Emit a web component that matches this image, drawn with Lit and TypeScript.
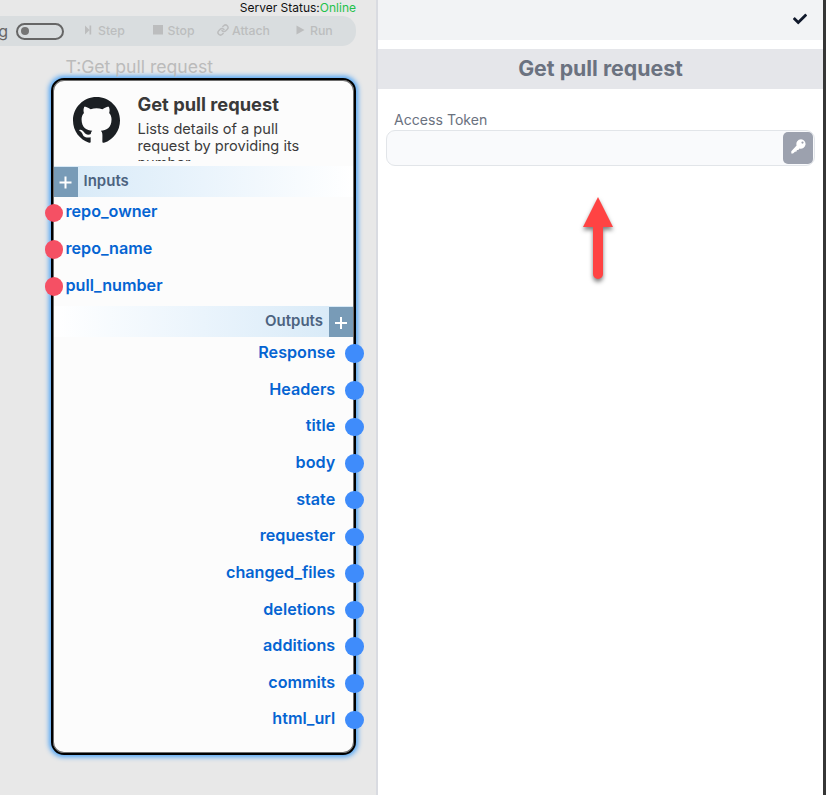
import { LitElement, html, css } from "lit";
import { customElement, property } from "lit/decorators.js";

const sans = css`Inter, "Liberation Sans", sans-serif`;

@customElement("tool-bar")
class ToolBar extends LitElement {
  static styles = css`
    :host { display: flex; box-sizing: border-box; height: 30px; width: 356px; align-items: center; background: #d9dddf; border-radius: 0 14px 14px 0; overflow: hidden; font: 500 12.3px/30px ${sans}; color: #bcbdbe; white-space: nowrap; }
    .label { flex: none; width: 8px; margin-right: 8px; display: flex; justify-content: flex-end; font-weight: 400; font-size: 16px; color: #666; }
    .switch { flex: none; box-sizing: border-box; width: 48px; height: 17px; border: 2px solid #666; border-radius: 9px; padding: 2.5px 3px; margin-right: 21px; }
    .knob { width: 8px; height: 8px; border-radius: 50%; background: #757575; }
    .item { display: flex; align-items: center; flex: none; }
    svg { fill: #bcbdbe; flex: none; display: block; position: relative; top: -1px; }
    .step { width: 68px; } .stop { width: 64px; } .attach { width: 79px; }
    .step svg { margin-right: 6px; }
    .stop svg { margin-right: 4.5px; }
    .attach svg { margin-right: 3px; }
    .run svg { margin-right: 5px; }
  `;
  render() {
    return html`
      <span class="label">Debug</span>
      <span class="switch"><div class="knob"></div></span>
      <span class="item step"><svg width="7" height="10" viewBox="0 0 7 10"><path d="M0 .5l4.500 4.500L0 9.500zM4.500 .5h1.700v9H4.500z" /></svg>Step</span>
      <span class="item stop"><svg width="10" height="10" viewBox="0 0 10 10"><path d="M0 0h10v9.500H0z" /></svg>Stop</span>
      <span class="item attach"><svg width="12" height="12" viewBox="0 0 24 24"><g fill="none" stroke="#bcbdbe" stroke-width="3" stroke-linecap="round"><path d="M10 13a5 5 0 0 0 7.540.54l3-3a5 5 0 0 0-7.070-7.070l-1.720 1.710" /><path d="M14 11a5 5 0 0 0-7.540-.54l-3 3a5 5 0 0 0 7.070 7.070l1.710-1.710" /></g></svg>Attach</span>
      <span class="item run"><svg width="9" height="10" viewBox="0 0 9 10"><path d="M.5.5L8.500 5l-8 4.500z" /></svg>Run</span>
    `;
  }
}

@customElement("flow-node")
class FlowNode extends LitElement {
  @property({ attribute: false }) inputs: string[] = [];
  @property({ attribute: false }) outputs: string[] = [];
  static styles = css`
    :host { display: block; box-sizing: border-box; width: 305px; height: 677px; border: 2px solid #000; border-radius: 13px; background: #fcfcfc; box-shadow: 0 0 5px 1.500px #4da3f5, inset 0 0 0 1px #6d6d6d; font-family: ${sans}; }
    .head { display: flex; height: 86px; box-sizing: border-box; padding: 0 20px; }
    .logo { flex: none; margin: 17px 17.500px 0 0; fill: #1b1f23; }
    .info { padding-top: 13px; height: 84px; box-sizing: border-box; width: 180px; color: #3b3b3b; }
    .name { font: 700 18.300px/23px ${sans}; color: #393939; white-space: nowrap; }
    .desc { font: 400 14.600px/17px ${sans}; margin-top: 5px; height: 40px; overflow: hidden; }
    .bar { display: flex; align-items: center; height: 31px; font-weight: 600; font-size: 15px; color: #4c6380; }
    .in { background: linear-gradient(90deg, #d6e9f7, #eaf4fc 50%, #fff); margin: 0 1px 0 0.500px; }
    .out { background: linear-gradient(270deg, #d6e9f7, #eaf4fc 50%, #fff); justify-content: flex-end; margin: 0 1px; }
    .title { margin: 0 6px; position: relative; top: -1px; }
    .plus { width: 24px; height: 30px; background: #789bb7; display: block; }
    .row { display: flex; align-items: center; height: 36.630px; font-weight: 600; font-size: 16.150px; color: #0564d2; }
    .row span { position: relative; top: -1.500px; }
    .inputs .row { height: 36.700px; margin-left: -8.500px; gap: 2.500px; }
    .inputs .row span { top: -2px; }
    .outputs .row { margin-right: -9.700px; gap: 10px; justify-content: flex-end; }
    .dot { flex: none; width: 18.500px; height: 18.500px; border-radius: 50%; }
    .inputs .dot { background: #f55064; position: relative; top: -0.300px; }
    .outputs .dot { background: #3f8cfb; }
    .inputs { height: 109px; margin-top: -2px; margin-bottom: 2px; }
    .outputs { margin-top: -1.700px; }
  `;
  private plus(x: number, y: number) {
    return html`<svg class="plus" viewBox="0 0 24 30"><path d="M${x - 6} ${y}h12M${x} ${y - 6}v12" stroke="#fff" stroke-width="2" /></svg>`;
  }
  render() {
    return html`
      <div class="head">
        <svg class="logo" width="47" height="47" viewBox="0 0 16 16"><path d="M8 0C3.580 0 0 3.580 0 8c0 3.540 2.290 6.530 5.470 7.590.4.070.55-.17.55-.38 0-.19-.01-.82-.01-1.490-2.010.37-2.530-.49-2.690-.94-.09-.23-.48-.94-.82-1.130-.28-.15-.68-.52-.01-.53.63-.01 1.080.58 1.230.82.72 1.210 1.870.87 2.330.66.07-.52.28-.87.51-1.070-1.780-.2-3.640-.89-3.640-3.950 0-.87.31-1.590.82-2.150-.08-.2-.36-1.020.08-2.120 0 0 .67-.21 2.200.82.64-.18 1.320-.27 2-.27s1.360.09 2 .27c1.530-1.040 2.200-.82 2.200-.82.44 1.100.16 1.920.08 2.120.51.56.82 1.270.82 2.150 0 3.070-1.870 3.750-3.650 3.950.29.25.54.73.54 1.480 0 1.070-.01 1.930-.01 2.200 0 .21.15.46.55.38A8.010 8.010 0 0 0 16 8c0-4.420-3.580-8-8-8z" /></svg>
        <div class="info">
          <div class="name">Get pull request</div>
          <div class="desc">Lists details of a pull request by providing its number.</div>
        </div>
      </div>
      <div class="bar in">${this.plus(11.5, 15.5)}<span class="title">Inputs</span></div>
      <div class="inputs">${this.inputs.map((n) => html`<div class="row"><i class="dot"></i><span>${n}</span></div>`)}</div>
      <div class="bar out"><span class="title">Outputs</span>${this.plus(12, 16)}</div>
      <div class="outputs">${this.outputs.map((n) => html`<div class="row"><span>${n}</span><i class="dot"></i></div>`)}</div>
    `;
  }
}

@customElement("detail-panel")
class DetailPanel extends LitElement {
  static styles = css`
    :host { display: block; flex: 1; background: #fff; font-family: ${sans}; }
    .top { height: 40px; box-sizing: border-box; background: #f2f3f5; display: flex; justify-content: flex-end; padding: 12px 16px 0 0; }
    .top svg { fill: #10182b; display: block; }
    .title { margin-top: 9px; height: 40px; background: #e5e6ea; color: #6b7280; font: 700 21.300px/39px ${sans}; text-align: center; }
    .label { margin: 21px 0 0 16px; font-size: 14.100px; line-height: 20px; color: #6b7280; }
    .field { margin: 0 8px; box-sizing: border-box; height: 36px; border: 1px solid #e2e5e9; border-radius: 9px; background: #f9fafc; display: flex; justify-content: flex-end; align-items: center; padding-right: 1px; }
    .key { width: 30px; height: 32px; border-radius: 5px; background: #9ca1ae; display: flex; align-items: center; justify-content: center; }
    .key svg { fill: #fff; margin-bottom: 3px; }
    .arrow { display: block; margin: 26px 0 0 199px; filter: drop-shadow(0 3px 2px rgba(0,0,0,.5)); overflow: visible; }
  `;
  render() {
    return html`
      <div class="top"><svg width="14" height="14" viewBox="0 0 512 512"><path d="M173.898 439.404l-166.400-166.400c-9.997-9.997-9.997-26.206 0-36.204l36.203-36.204c9.997-9.998 26.207-9.998 36.204 0L192 312.690 432.095 72.596c9.997-9.997 26.207-9.997 36.204 0l36.203 36.204c9.997 9.997 9.997 26.206 0 36.204l-294.400 294.401c-9.998 9.997-26.207 9.997-36.204-.001z" /></svg></div>
      <div class="title">Get pull request</div>
      <div class="label">Access Token</div>
      <div class="field"><div class="key"><svg width="15" height="15" viewBox="0 0 15 15"><path fill-rule="evenodd" d="M10 .3a4.700 4.700 0 1 1-1.500 9.200L7.300 10.900H5.900L5.600 12.400 4 12.700 2 14.500H.3V12.200L5.600 6.500A4.700 4.700 0 0 1 10 .3zM11.500 2.500a1.100 1.100 0 1 0 0 2.200 1.100 1.100 0 0 0 0-2.200z" /></svg></div></div>
      <svg class="arrow" width="42" height="92" viewBox="0 0 42 92"><path fill="#ff4343" d="M21 5L36 35H26V82a5 5 0 0 1-10 0V35H6z" /></svg>
    `;
  }
}

@customElement("app-root")
class AppRoot extends LitElement {
  static styles = css`
    :host { display: flex; width: 826px; height: 795px; overflow: hidden; font-family: ${sans}; }
    .canvas { width: 376px; flex: none; background: #e8e8e8; border-right: 2px solid #d9dbe1; box-sizing: content-box; overflow: hidden; }
    .status { height: 16px; width: 356px; text-align: right; font-size: 12px; line-height: 16px; color: #111; white-space: nowrap; }
    .online { color: #1fc14a; }
    .tag { height: 32px; padding-left: 65.500px; font-size: 17.600px; line-height: 42px; color: #bbb; white-space: nowrap; }
    flow-node { margin-left: 51px; }
    .edge { width: 3px; flex: none; background: #363636; }
  `;
  render() {
    return html`
      <div class="canvas">
        <div class="status">Server Status:<span class="online">Online</span></div>
        <tool-bar></tool-bar>
        <div class="tag">T:Get pull request</div>
        <flow-node
          .inputs=${["repo_owner", "repo_name", "pull_number"]}
          .outputs=${["Response", "Headers", "title", "body", "state", "requester", "changed_files", "deletions", "additions", "commits", "html_url"]}
        ></flow-node>
      </div>
      <detail-panel></detail-panel>
      <div class="edge"></div>
    `;
  }
}
